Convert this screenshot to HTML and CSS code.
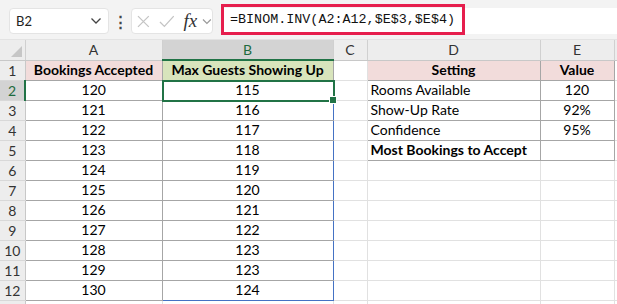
FILE: index.html
```html
<!DOCTYPE html>
<html lang="en">

<head>
    <meta charset="utf-8"/>
    <title>BINOM.INV</title>
    <link rel="stylesheet" href="styles.css">
</head>

<body>
<div class="bar">
    <div class="namebox">
        <span>B2</span>
        <svg class="chev" width="12" height="8" viewBox="0 0 12 8"><path d="M1.5 1.5 L6 6 L10.5 1.5" fill="none" stroke="#444" stroke-width="1.3"/></svg>
    </div>
    <div class="dots">⋮</div>
    <div class="fxbox">
        <svg class="ic-x" width="13" height="13" viewBox="0 0 13 13"><path d="M1 1 L12 12 M12 1 L1 12" stroke="#c4c4c4" stroke-width="1.3"/></svg>
        <svg class="ic-ok" width="16" height="13" viewBox="0 0 16 13"><path d="M1 7 L5.5 11.5 L15 1" fill="none" stroke="#c4c4c4" stroke-width="1.3"/></svg>
        <span class="fx">fx</span>
        <svg class="ic-dd" width="10" height="7" viewBox="0 0 10 7"><path d="M1 1.5 L5 5.5 L9 1.5" fill="none" stroke="#999" stroke-width="1.2"/></svg>
    </div>
    <div class="formula">
        <div class="input">=BINOM.INV(A2:A12,$E$3,$E$4)</div>
    </div>
</div>

<table class="sheet">
    <colgroup>
        <col class="w-rn"><col class="w-a"><col class="w-b"><col class="w-c"><col class="w-d"><col class="w-e"><col>
    </colgroup>
    <tr class="head">
        <th class="corner"><span class="tri"></span></th>
        <th>A</th><th class="sel-col">B</th><th>C</th><th>D</th><th>E</th><th></th>
    </tr>
    <tr>
        <th class="rn">1</th>
        <td class="tb pink bold">Bookings Accepted</td>
        <td class="tb green bold">Max Guests Showing Up</td>
        <td></td>
        <td class="tb pink bold">Setting</td>
        <td class="tb pink bold">Value</td>
        <td></td>
    </tr>
    <tr>
        <th class="rn sel-row">2</th>
        <td class="tb">120</td><td class="tb rng active">115</td><td></td>
        <td class="tb left">Rooms Available</td><td class="tb">120</td><td></td>
    </tr>
    <tr>
        <th class="rn">3</th>
        <td class="tb">121</td><td class="tb rng">116</td><td></td>
        <td class="tb left">Show-Up Rate</td><td class="tb">92%</td><td></td>
    </tr>
    <tr>
        <th class="rn">4</th>
        <td class="tb">122</td><td class="tb rng">117</td><td></td>
        <td class="tb left">Confidence</td><td class="tb">95%</td><td></td>
    </tr>
    <tr>
        <th class="rn">5</th>
        <td class="tb">123</td><td class="tb rng">118</td><td></td>
        <td class="tb left bold">Most Bookings to Accept</td><td class="tb"></td><td></td>
    </tr>
    <tr>
        <th class="rn">6</th>
        <td class="tb">124</td><td class="tb rng">119</td><td></td><td></td><td></td><td></td>
    </tr>
    <tr>
        <th class="rn">7</th>
        <td class="tb">125</td><td class="tb rng">120</td><td></td><td></td><td></td><td></td>
    </tr>
    <tr>
        <th class="rn">8</th>
        <td class="tb">126</td><td class="tb rng">121</td><td></td><td></td><td></td><td></td>
    </tr>
    <tr>
        <th class="rn">9</th>
        <td class="tb">127</td><td class="tb rng">122</td><td></td><td></td><td></td><td></td>
    </tr>
    <tr>
        <th class="rn">10</th>
        <td class="tb">128</td><td class="tb rng">123</td><td></td><td></td><td></td><td></td>
    </tr>
    <tr>
        <th class="rn">11</th>
        <td class="tb">129</td><td class="tb rng">123</td><td></td><td></td><td></td><td></td>
    </tr>
    <tr>
        <th class="rn">12</th>
        <td class="tb">130</td><td class="tb rng last">124</td><td></td><td></td><td></td><td></td>
    </tr>
    <tr>
        <th class="rn"></th>
        <td></td><td></td><td></td><td></td><td></td><td></td>
    </tr>
</table>
</body>
</html>
```

FILE: styles.css
```css
* {
    padding: 0;
    margin: 0;
    box-sizing: border-box;
}

body {
    width: 617px;
    height: 304px;
    overflow: hidden;
    background: #fff;
    font-family: Lato, "Liberation Sans", sans-serif;
}

/* formula bar */
.bar {
    height: 40px;
    background: #f3f3f3;
    display: flex;
    align-items: flex-start;
    padding: 8px 0 0 9px;
    border-bottom: 1px solid #e3e3e3;
}

.namebox {
    width: 100px;
    height: 26px;
    background: #fff;
    border: 1px solid #e4e4e4;
    border-radius: 4px;
    display: flex;
    align-items: center;
    justify-content: space-between;
    padding: 0 6px 0 6px;
    font-size: 13px;
    color: #222;
}

.dots {
    width: 22px;
    text-align: center;
    font-size: 15px;
    line-height: 26px;
    color: #444;
    font-weight: bold;
}

.fxbox {
    width: 82px;
    height: 26px;
    background: #fff;
    border: 1px solid #e4e4e4;
    border-radius: 4px;
    display: flex;
    align-items: center;
    padding-left: 5px;
}

.ic-ok {
    margin-left: 9px;
}

.fx {
    font-family: "Liberation Serif", serif;
    font-style: italic;
    font-size: 19px;
    line-height: 24px;
    color: #333;
    margin-left: 9px;
    width: 16px;
}

.ic-dd {
    margin-left: 3px;
}

.formula {
    flex: 1;
    height: 26px;
    margin-left: 8px;
    background: #fff;
}

.input {
    width: 244px;
    height: 31px;
    margin-top: -4px;
    border: 3px solid #e61e4d;
    padding-left: 6px;
    font-family: "Liberation Mono", monospace;
    font-size: 13.4px;
    line-height: 25px;
    color: #111;
}

/* grid */
.sheet {
    border-collapse: collapse;
    table-layout: fixed;
    width: 620px;
    font-size: 14px;
    color: #000;
}

.w-rn { width: 25px; }
.w-a { width: 137px; }
.w-b { width: 171px; }
.w-c { width: 34px; }
.w-d { width: 173px; }
.w-e { width: 74px; }

.sheet tr {
    height: 20px;
}

.sheet td {
    border: 1px solid #e1e1e1;
    text-align: center;
    padding: 0 3px;
    white-space: nowrap;
    overflow: hidden;
    line-height: 18px;
}

.head th {
    background: #ededed;
    font-weight: normal;
    color: #333;
    border-right: 1px solid #d0d0d0;
    border-bottom: 1px solid #c8c8c8;
    height: 20px;
}

.head .sel-col {
    background: #d3d3d3;
    color: #1e6b3e;
    border-bottom: 2px solid #217346;
}

.corner {
    position: relative;
}

.tri {
    position: absolute;
    right: 3px;
    bottom: 3px;
    width: 0;
    height: 0;
    border-left: 11px solid transparent;
    border-bottom: 11px solid #c6c6c6;
}

.rn {
    background: #ededed;
    font-weight: normal;
    color: #333;
    border-right: 1px solid #c8c8c8;
    border-bottom: 1px solid #d8d8d8;
    text-align: center;
}

.rn.sel-row {
    background: #d3d3d3;
    color: #1e6b3e;
    border-right: 2px solid #217346;
}

.sheet td.tb {
    border: 1px solid #a6a6a6;
}

.sheet td.left {
    text-align: left;
}

.pink {
    background: #f2dcdb;
}

.green {
    background: #d8e4bc;
}

.bold {
    font-weight: bold;
}

.sheet td.rng {
    border-left: 1px solid #4472c4;
    border-right: 1px solid #4472c4;
}

.sheet td.rng.last {
    border-bottom: 1px solid #4472c4;
}

.sheet td.active {
    position: relative;
    overflow: visible;
}

.active::before {
    content: "";
    position: absolute;
    left: -1px;
    top: -1px;
    right: -2px;
    bottom: -2px;
    border: 2px solid #217346;
}

.active::after {
    content: "";
    position: absolute;
    right: -4px;
    bottom: -4px;
    width: 6px;
    height: 6px;
    background: #217346;
    border: 1px solid #fff;
}
```
